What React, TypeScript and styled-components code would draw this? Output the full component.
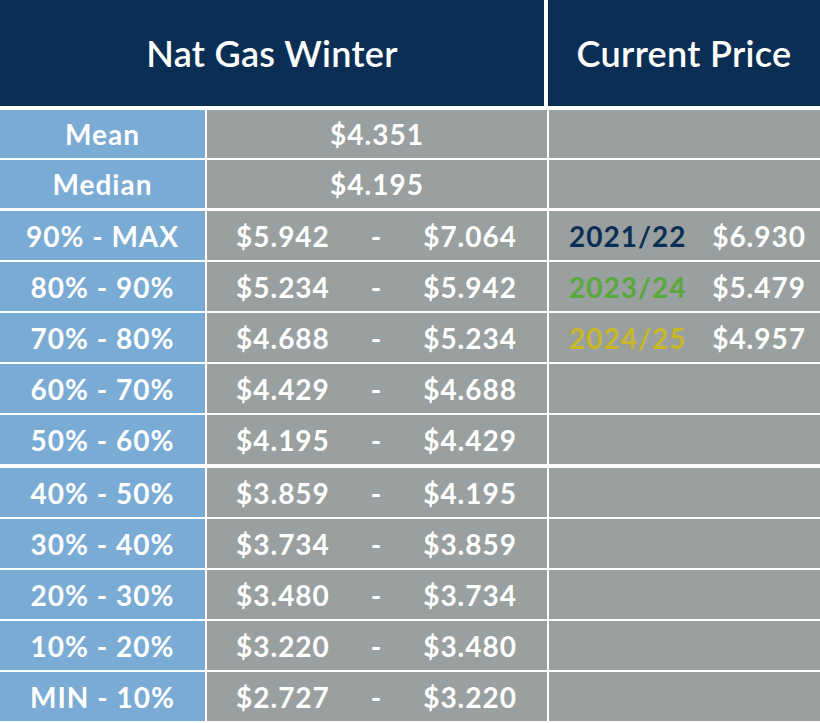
import styled, { createGlobalStyle } from 'styled-components';

const GlobalStyle = createGlobalStyle`
  html, body {
    margin: 0;
    padding: 0;
    background: #ffffff;
  }
  body {
    font-family: Lato, "Noto Sans", "Liberation Sans", sans-serif;
  }
`;

const navy = '#0b2f54';
const labelBlue = '#7aabd4';
const cellGray = '#99a09f';

const Board = styled.div`
  width: 820px;
  height: 723px;
  display: flex;
  flex-direction: column;
  background: #ffffff;
  overflow: hidden;
`;

const HeaderRow = styled.div`
  display: grid;
  grid-template-columns: 544px 1fr;
  column-gap: 4px;
  height: 106px;
  margin-bottom: 4px;
`;

const HeaderCell = styled.div`
  background: ${navy};
  color: #ffffff;
  display: flex;
  align-items: center;
  justify-content: center;
  font-size: 36px;
  font-weight: 600;
  letter-spacing: 0.3px;
`;

const Row = styled.div<{ $gapAfter: number; $height: number }>`
  display: grid;
  grid-template-columns: 205px 340px 1fr;
  column-gap: 2px;
  height: ${props => props.$height}px;
  margin-bottom: ${props => props.$gapAfter}px;
  flex-shrink: 0;
`;

const LabelCell = styled.div`
  background: ${labelBlue};
  color: #ffffff;
  display: flex;
  align-items: center;
  justify-content: center;
  font-size: 28px;
  font-weight: 700;
  letter-spacing: 1px;
`;

const ValueCell = styled.div<{ $single?: boolean }>`
  background: ${cellGray};
  color: #ffffff;
  display: grid;
  grid-template-columns: ${props => (props.$single ? '1fr' : '1fr auto 1fr')};
  align-items: center;
  justify-items: ${props => (props.$single ? 'center' : 'stretch')};
  padding: ${props => (props.$single ? '0' : '0 30px 0 29px')};
  font-size: 28px;
  font-weight: 700;
  letter-spacing: 1px;
`;

const Low = styled.span`
  justify-self: start;
`;

const Dash = styled.span`
  justify-self: center;
`;

const High = styled.span`
  justify-self: end;
`;

const CurrentCell = styled.div`
  background: ${cellGray};
  display: flex;
  align-items: center;
  justify-content: space-between;
  padding: 0 14px 0 20px;
  font-size: 28px;
  font-weight: 700;
  letter-spacing: 1px;
`;

const Season = styled.span<{ $color: string }>`
  color: ${props => props.$color};
`;

const Price = styled.span`
  color: #ffffff;
`;

interface Band {
  label: string;
  low: string;
  high: string;
}

const bands: Band[] = [
  { label: '90% - MAX', low: '$5.942', high: '$7.064' },
  { label: '80% - 90%', low: '$5.234', high: '$5.942' },
  { label: '70% - 80%', low: '$4.688', high: '$5.234' },
  { label: '60% - 70%', low: '$4.429', high: '$4.688' },
  { label: '50% - 60%', low: '$4.195', high: '$4.429' },
  { label: '40% - 50%', low: '$3.859', high: '$4.195' },
  { label: '30% - 40%', low: '$3.734', high: '$3.859' },
  { label: '20% - 30%', low: '$3.480', high: '$3.734' },
  { label: '10% - 20%', low: '$3.220', high: '$3.480' },
  { label: 'MIN - 10%', low: '$2.727', high: '$3.220' },
];

const current = [
  { season: '2021/22', price: '$6.930', color: navy },
  { season: '2023/24', price: '$5.479', color: '#58a83a' },
  { season: '2024/25', price: '$4.957', color: '#c8b828' },
];

export default function App() {
  return (
    <>
      <GlobalStyle />
      <Board>
        <HeaderRow>
          <HeaderCell>Nat Gas Winter</HeaderCell>
          <HeaderCell>Current Price</HeaderCell>
        </HeaderRow>

        <Row $height={48} $gapAfter={2}>
          <LabelCell>Mean</LabelCell>
          <ValueCell $single>$4.351</ValueCell>
          <CurrentCell />
        </Row>
        <Row $height={48} $gapAfter={3}>
          <LabelCell>Median</LabelCell>
          <ValueCell $single>$4.195</ValueCell>
          <CurrentCell />
        </Row>

        {bands.map((band, i) => {
          const cur = current[i];
          return (
            <Row key={band.label} $height={49} $gapAfter={i === 4 ? 4 : 2}>
              <LabelCell>{band.label}</LabelCell>
              <ValueCell>
                <Low>{band.low}</Low>
                <Dash>-</Dash>
                <High>{band.high}</High>
              </ValueCell>
              <CurrentCell>
                {cur && (
                  <>
                    <Season $color={cur.color}>{cur.season}</Season>
                    <Price>{cur.price}</Price>
                  </>
                )}
              </CurrentCell>
            </Row>
          );
        })}
      </Board>
    </>
  );
}
